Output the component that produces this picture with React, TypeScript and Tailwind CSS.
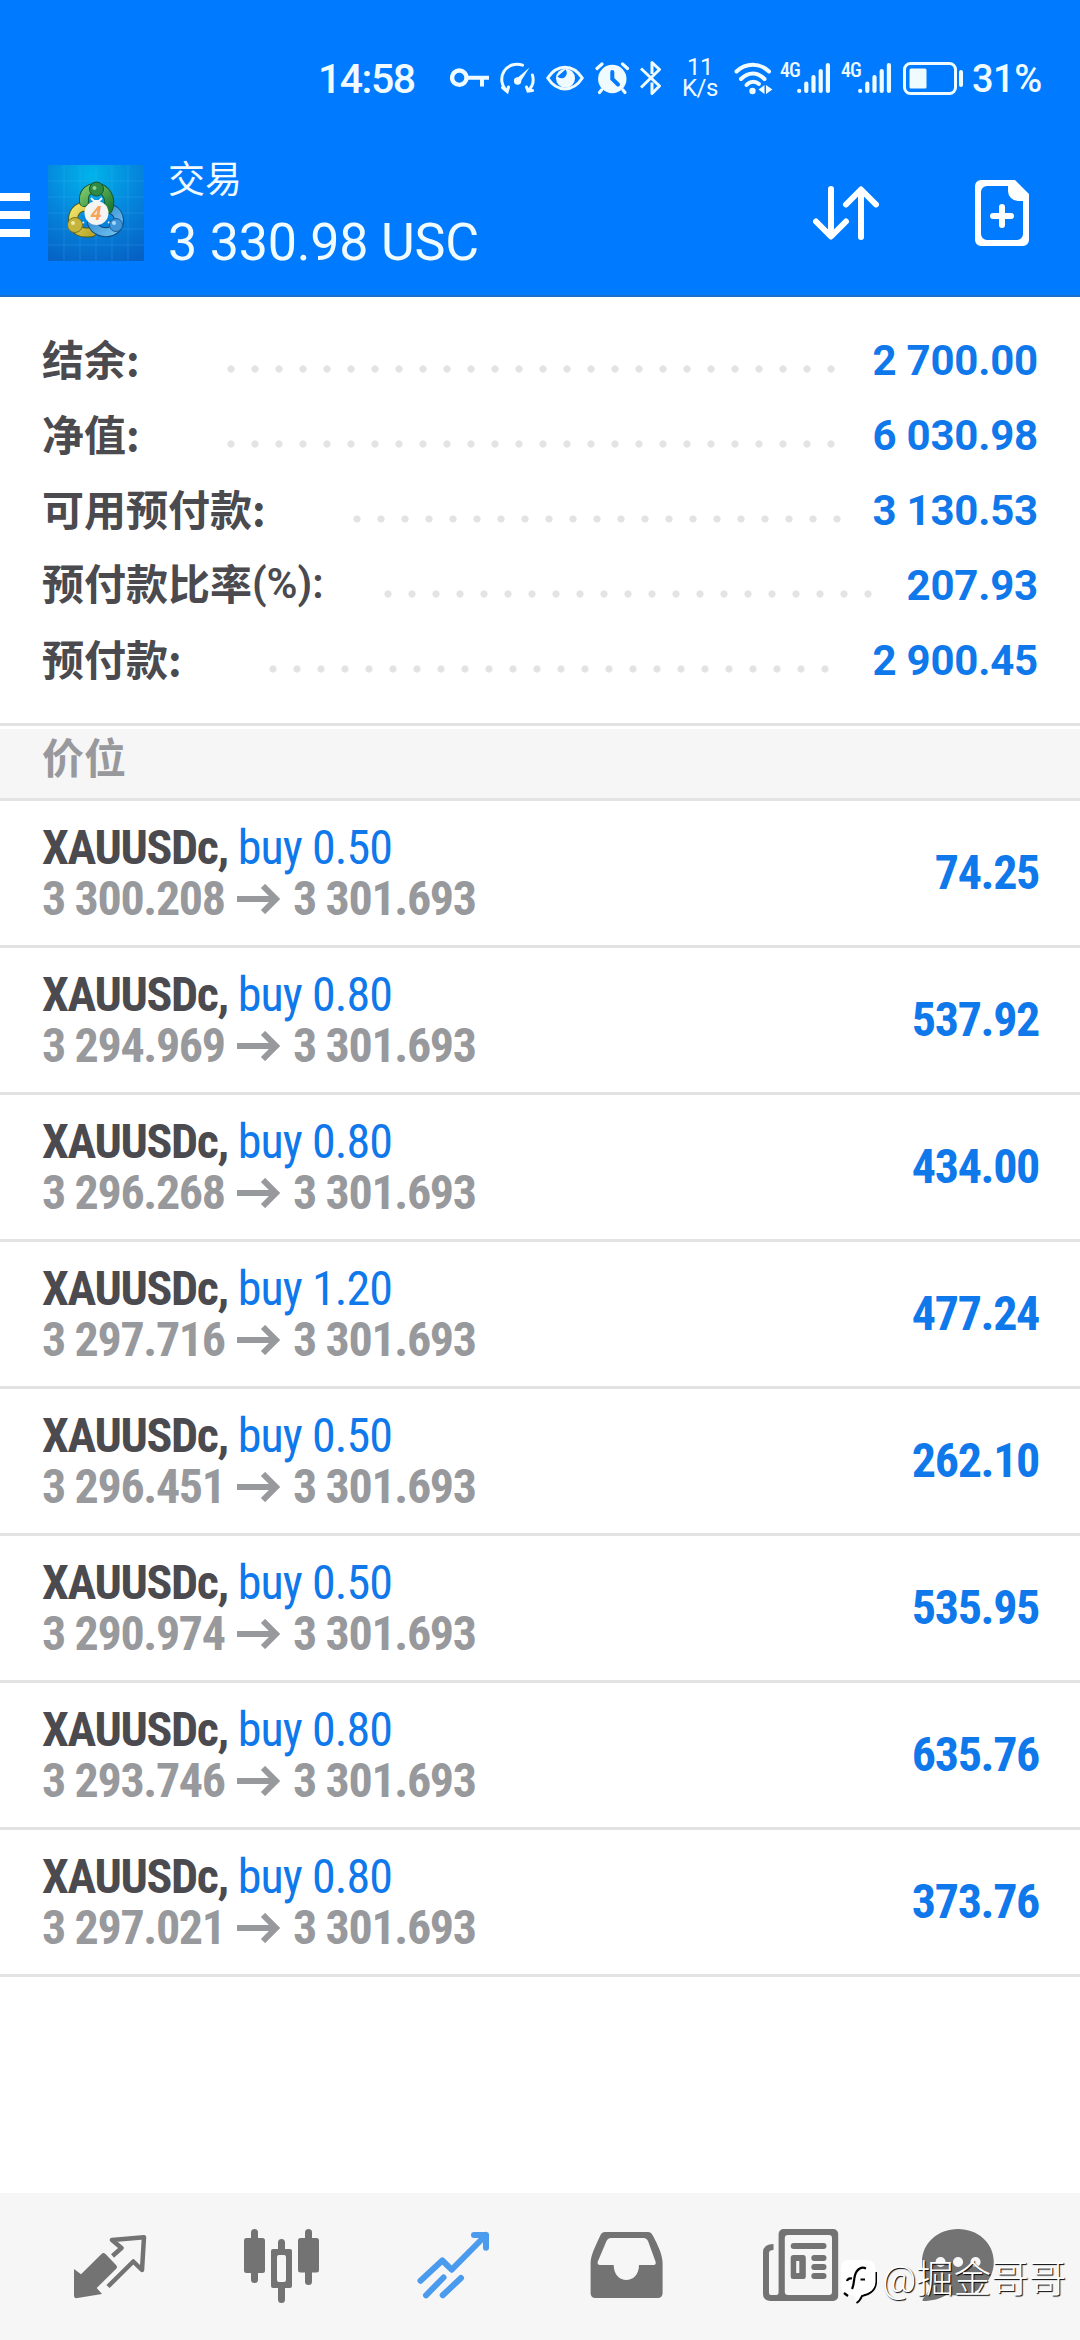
import type { ReactNode } from "react";

type Summary = { label: string; suffix?: string; value: string; labelWidth: string; dotsWidth: string };

const SUMMARY: Summary[] = [
  { label: "结余:", value: "2 700.00", labelWidth: "w-[185px]", dotsWidth: "w-[612px]" },
  { label: "净值:", value: "6 030.98", labelWidth: "w-[185px]", dotsWidth: "w-[612px]" },
  { label: "可用预付款:", value: "3 130.53", labelWidth: "w-[311px]", dotsWidth: "w-[492px]" },
  { label: "预付款比率", suffix: "(%):", value: "207.93", labelWidth: "w-[342px]", dotsWidth: "w-[492px]" },
  { label: "预付款:", value: "2 900.45", labelWidth: "w-[227px]", dotsWidth: "w-[564px]" },
];

const POSITIONS = [
  { lots: "0.50", open: "3 300.208", profit: "74.25" },
  { lots: "0.80", open: "3 294.969", profit: "537.92" },
  { lots: "0.80", open: "3 296.268", profit: "434.00" },
  { lots: "1.20", open: "3 297.716", profit: "477.24" },
  { lots: "0.50", open: "3 296.451", profit: "262.10" },
  { lots: "0.50", open: "3 290.974", profit: "535.95" },
  { lots: "0.80", open: "3 293.746", profit: "635.76" },
  { lots: "0.80", open: "3 297.021", profit: "373.76" },
];

const PRICE = "3 301.693";

function Signal({ className }: { className: string }) {
  return (
    <div className={`flex items-start ${className}`}>
      <span className="mt-[1px] w-[17px] text-[20px] leading-[19px] font-medium tracking-[-1px] [font-stretch:75%]">4G</span>
      <svg width="34" height="36" viewBox="0 0 34 36" stroke="currentColor" strokeWidth="4.2" strokeLinecap="round">
        <path d="M2.2 30.8v.2M9.3 23.5V31M16.5 17V31M23.7 11V31M30.9 5V31" />
      </svg>
    </div>
  );
}

function StatusBar() {
  return (
    <div className="flex h-[140px] items-start pt-[60px] text-[#f0fbff]">
      <span className="ml-[318px] w-[132px] text-[41px] leading-[39px] font-medium tracking-[-1.5px]">14:58</span>
      <svg width="40" height="36" viewBox="0 0 40 36" fill="none" stroke="currentColor" strokeWidth="4">
        <circle cx="9.3" cy="17.7" r="7.2" strokeWidth="4.4" />
        <path d="M17 17.7H39M32 18v8.6" />
      </svg>
      <svg className="ml-[10px]" width="36" height="36" viewBox="0 0 36 36" fill="none" stroke="currentColor" strokeWidth="3" strokeLinecap="round">
        <path d="M2.5 27.5 7.2 31.6 8.5 27M7.2 31A15.2 15.2 0 0 1 22.5 5.2M32.4 15A15.2 15.2 0 0 1 28.3 30.5M32.5 30.6 28 31.2 26.5 27" />
        <path d="M15.5 19.5 29.5 7.5 20 22.5Z" fill="currentColor" stroke="none" />
        <circle cx="17.6" cy="21" r="3.7" fill="currentColor" stroke="none" />
      </svg>
      <svg className="ml-[10px]" width="38" height="36" viewBox="0 0 38 36" fill="none" stroke="currentColor" strokeWidth="3">
        <path d="M1.7 18C11 3.5 27 3.5 36.3 18 27 32.5 11 32.5 1.7 18Z" strokeLinejoin="round" />
        <circle cx="19.5" cy="18.3" r="9.5" fill="currentColor" stroke="none" />
        <path d="M19.5 9.5A5 5 0 1 1 11.5 16.5" fill="#007aff" stroke="none" />
      </svg>
      <svg className="ml-[11px]" width="35" height="36" viewBox="0 0 35 36" fill="none" stroke="currentColor" strokeWidth="3.2" strokeLinecap="round">
        <circle cx="17.3" cy="19" r="14.2" fill="currentColor" stroke="none" />
        <path d="M2 8.5 7 4M32.5 8.5 27.5 4M6.5 30 4.5 32.5M28 30 30 32.5" />
        <path d="M17.3 12V19L23 24.5" stroke="#007aff" strokeWidth="4" />
      </svg>
      <svg className="ml-[10px]" width="22" height="36" viewBox="0 0 22 36" fill="none" stroke="currentColor" strokeWidth="3" strokeLinejoin="round">
        <path d="M1 8.5 19.5 26 12 33.5V22.5M1 27.5 19.5 9.5 12 2.5V14" />
      </svg>
      <div className="ml-[20px] flex w-[36px] flex-col items-center text-[24px] leading-[21px] tracking-[-0.5px]">
        <span className="-mt-[3px]">11</span>
        <span>K/s</span>
      </div>
      <svg className="ml-[16px]" width="40" height="36" viewBox="0 0 40 36" fill="none" stroke="currentColor" strokeWidth="4" strokeLinecap="round">
        <path d="M2.5 11.5C12 2.5 25.5 2.5 35 11.5M7 19C14.5 11.5 23 11.5 30.5 19" />
        <path d="M12.5 25C16 21 21.5 21 25 24" />
        <circle cx="18.5" cy="31" r="3.2" fill="currentColor" stroke="none" />
        <path d="M24.5 29.5 30.5 25V34ZM32 25V34L38.5 29.5Z" fill="currentColor" stroke="none" />
      </svg>
      <Signal className="ml-[6px]" />
      <Signal className="ml-[10px]" />
      <svg className="ml-[11px]" width="62" height="36" viewBox="0 0 62 36" fill="none" stroke="currentColor">
        <rect x="1.500" y="3.500" width="51" height="30" rx="6" strokeWidth="3" />
        <rect x="6.500" y="8.500" width="17" height="20" rx="1.500" fill="currentColor" stroke="none" />
        <path d="M58 12V25" strokeWidth="4" strokeLinecap="round" />
      </svg>
      <span className="ml-[7px] text-[38px] leading-[38px] font-medium tracking-[-0.5px]">31%</span>
    </div>
  );
}

function Logo() {
  return (
    <svg width="96" height="96" viewBox="0 0 96 96">
      <defs>
        <radialGradient id="sky" cx="0.45" cy="0.1" r="1">
          <stop offset="0" stopColor="#00b4ea" />
          <stop offset="0.5" stopColor="#0585dc" />
          <stop offset="1" stopColor="#0661c4" />
        </radialGradient>
        <linearGradient id="green" x1="0" y1="0" x2="1" y2="1">
          <stop offset="0" stopColor="#7cc96a" />
          <stop offset="1" stopColor="#1f7a35" />
        </linearGradient>
        <linearGradient id="gold" x1="0" y1="0" x2="1" y2="1">
          <stop offset="0" stopColor="#f0e468" />
          <stop offset="1" stopColor="#b9a82c" />
        </linearGradient>
        <linearGradient id="azure" x1="0" y1="0" x2="1" y2="1">
          <stop offset="0" stopColor="#2f86cc" />
          <stop offset="1" stopColor="#6cc0f0" />
        </linearGradient>
      </defs>
      <rect width="96" height="96" fill="url(#sky)" />
      <path d="M16 0V96M32 0V96M48 0V96M64 0V96M80 0V96M0 16H96M0 32H96M0 48H96M0 64H96M0 80H96" stroke="#5cc4f5" strokeOpacity="0.2" />
      <g fill="none" strokeLinecap="round">
        <path d="M41 43C32 39 25 46 25 55C25 66 34 69 44 67" stroke="#4f5a1c" strokeWidth="10" />
        <path d="M41 43C32 39 25 46 25 55C25 66 34 69 44 67" stroke="url(#gold)" strokeWidth="8" />
        <path d="M44 58C47 66 56 69 64 66C74 62 73 48 63 44" stroke="#12467c" strokeWidth="10" />
        <path d="M44 58C47 66 56 69 64 66C74 62 73 48 63 44" stroke="url(#azure)" strokeWidth="8" />
        <path d="M36 37C35 27 41 23 48 23C58 23 64 34 60 44" stroke="#155c2a" strokeWidth="10" />
        <path d="M36 37C35 27 41 23 48 23C58 23 64 34 60 44" stroke="url(#green)" strokeWidth="8" />
      </g>
      <path d="M43 33 46 36H51L54 33M31 60 36 57M60 57 65 60" stroke="#f4f4f2" strokeWidth="2" fill="none" />
      <circle cx="48.500" cy="24" r="7" fill="#2f8a46" stroke="#145a2a" />
      <circle cx="27" cy="60" r="7.500" fill="#c5b53c" stroke="#7d7420" />
      <circle cx="68" cy="60" r="6.500" fill="#3f95d8" stroke="#1a5c9a" />
      <circle cx="46.500" cy="23" r="2" fill="#8fd190" />
      <circle cx="25" cy="58" r="2" fill="#f3eaa0" />
      <circle cx="66" cy="58" r="2" fill="#a5d8fa" />
      <circle cx="48.500" cy="48" r="12" fill="#f4f4f2" />
      <text x="48" y="55" textAnchor="middle" fontSize="20" fontStyle="italic" fontWeight="700" fontFamily="Roboto, sans-serif" fill="#f7a35a">
        4
      </text>
    </svg>
  );
}

function Header() {
  return (
    <div className="flex h-[157px] items-start border-b-2 border-[#1a6fc9] text-white">
      <div className="mt-[53px] flex w-[30px] flex-col gap-[10px]">
        <div className="h-2 bg-white" />
        <div className="h-2 bg-white" />
        <div className="h-2 bg-white" />
      </div>
      <div className="mt-[25px] ml-[18px]">
        <Logo />
      </div>
      <div className="mt-[17px] ml-[24px] flex w-[645px] flex-col text-[#f0fbff]">
        <span className="text-[37px] leading-[48px]">交易</span>
        <span className="mt-[8px] text-[52px] leading-[60px] tracking-[-0.2px]">3 330.98 USC</span>
      </div>
      <svg className="mt-[46px]" width="66" height="54" viewBox="0 0 66 54" fill="none" stroke="currentColor" strokeWidth="6" strokeLinecap="round" strokeLinejoin="round">
        <path d="M18 3V50M3 35.5 18 50.5 33 35.5M48 51V4M33 18.5 48 3.5 63 18.5" />
      </svg>
      <svg className="mt-[40px] ml-[96px]" width="54" height="66" viewBox="0 0 54 66">
        <path
          fillRule="evenodd"
          fill="currentColor"
          d="M6 0H40L54 14V60a6 6 0 0 1-6 6H6a6 6 0 0 1-6-6V6a6 6 0 0 1 6-6ZM12 6a6 6 0 0 0-6 6V54a6 6 0 0 0 6 6H42a6 6 0 0 0 6-6V21H43A10 10 0 0 1 33 11V6Z"
        />
        <path d="M27 27V45M18 36H36" stroke="currentColor" strokeWidth="6" strokeLinecap="round" />
      </svg>
    </div>
  );
}

function SummaryRow({ row }: { row: Summary }) {
  return (
    <div className="flex h-[75px] items-center text-[42px] leading-[75px] font-bold">
      <div className={`-mt-[6px] flex shrink-0 whitespace-nowrap text-[#4a4a4f] ${row.labelWidth}`}>
        <span className="font-['Noto_Sans_CJK_SC',sans-serif]">{row.label}</span>
        {row.suffix && <span className="mt-[2px] font-semibold">{row.suffix}</span>}
      </div>
      <div
        className={`mt-4 h-[8px] shrink-0 bg-[radial-gradient(circle_at_4px_4px,#e3e3e3_3.2px,transparent_4px)] bg-[length:24px_8px] ${row.dotsWidth}`}
      />
      <span className="ml-auto whitespace-nowrap text-[#0f78ea] tracking-[-0.2px]">{row.value}</span>
    </div>
  );
}

function PositionRow({ lots, open, profit }: { lots: string; open: string; profit: string }) {
  return (
    <div className="flex h-[147px] items-center justify-between border-b-[3px] border-[#e3e3e3] px-[42px] text-[48px] leading-[51px] font-bold tracking-[-1.35px] [font-stretch:75%]">
      <div className="whitespace-nowrap">
        <div className="text-[#4a4a4f]">
          XAUUSDc, <span className="font-normal tracking-[-0.9px] text-[#0f78ea]">buy {lots}</span>
        </div>
        <div className="flex items-center text-[#98999c]">
          <span className="w-[195px]">{open}</span>
          <svg className="mr-[13px]" width="43" height="30" viewBox="0 0 43 30" fill="none" stroke="currentColor" strokeWidth="6">
            <path d="M0 15H39M26 2 39 15 26 28" />
          </svg>
          <span>{PRICE}</span>
        </div>
      </div>
      <span className="-mt-[2px] -mr-[1px] text-[#0f78ea]">{profit}</span>
    </div>
  );
}

function NavIcon({ className, children }: { className: string; children: ReactNode }) {
  return (
    <svg className={`shrink-0 ${className}`} width="80" height="80" viewBox="0 0 80 80" fill="currentColor">
      {children}
    </svg>
  );
}

function BottomNav() {
  return (
    <div className="relative flex h-[147px] bg-[#f6f6f6] pt-[33px] text-[#737373]">
      <NavIcon className="ml-[70px]">
        <path d="M4 43 11 48.3 31.5 28Q33.3 26 35.5 28L46 39Q48 41 46 43L26.7 62 32 68 6 72.3Q4 72 4 70Z" />
        <path d="M42.5 30 51.5 22 42 14 74 11.2 72 44 63.3 35.5 38 60.5" fill="none" stroke="currentColor" strokeWidth="4.5" strokeLinejoin="round" />
      </NavIcon>
      <NavIcon className="ml-[92px]">
        <rect x="2" y="12" width="21" height="35" rx="2.500" />
        <rect x="9" y="3" width="7" height="54" rx="3.500" />
        <path fillRule="evenodd" d="M31 23H48a2 2 0 0 1 2 2V60a2 2 0 0 1-2 2H31a2 2 0 0 1-2-2V25a2 2 0 0 1 2-2ZM37 29a2 2 0 0 0-2 2V54a2 2 0 0 0 2 2H42a2 2 0 0 0 2-2V31a2 2 0 0 0-2-2Z" />
        <path d="M36 24V16.5a3.5 3.5 0 0 1 7 0V24ZM36 61V73.5a3.5 3.5 0 0 0 7 0V61Z" />
        <rect x="56" y="12" width="21" height="34.500" rx="2.500" />
        <rect x="63" y="3" width="7" height="56" rx="3.500" />
      </NavIcon>
      <NavIcon className="ml-[92px] text-[#4a9bee]">
        <path
          d="M6.5 54.7 28.3 34.5 37.7 43.7 72 9M60 9H72V21.7M12 69.3 29.5 51.5M28.7 69.3 47 52"
          fill="none"
          stroke="currentColor"
          strokeWidth="6"
          strokeLinecap="round"
          strokeLinejoin="round"
        />
      </NavIcon>
      <NavIcon className="ml-[93px]">
        <path
          fillRule="evenodd"
          d="M18 6H61Q64 6 65.5 9C71 19 75.6 29 75.6 37V67Q75.6 72 70.6 72H8.6Q3.6 72 3.6 67V37C3.6 29 9 19 13.5 9Q15 6 18 6ZM24 12Q21 12 19.5 15L10.8 35.5Q9.8 39 13 39H26.7C26.7 59 52 59 52 39H66Q69.5 39 68.5 35.5L61 15Q59.5 12 56.5 12Z"
        />
      </NavIcon>
      <NavIcon className="ml-[94px]">
        <path
          fillRule="evenodd"
          d="M22.6 3H72.2a5 5 0 0 1 5 5V70a5 5 0 0 1-5 5H9Q2 74 2 68V26Q2.5 18 12.5 18V24Q8 24 8 27V67Q8 69 10 69H15.5Q17.6 69 17.6 66V8a5 5 0 0 1 5-5ZM27 9Q23.8 9 23.8 12V66Q23.8 69 27 69H68Q71 69 71 66V12Q71 9 68 9Z"
        />
        <path fillRule="evenodd" d="M32 29H42.5Q44.8 29 44.8 31.5V50.5Q44.8 53 42.5 53H32Q29.7 53 29.7 50.5V31.5Q29.7 29 32 29ZM35.2 35V47H38.3V35Z" />
        <path d="M32.7 20H62.5M53.3 32H62.5M53.3 41H62.5M53.3 50H62.5" stroke="currentColor" strokeWidth="6" strokeLinecap="round" />
      </NavIcon>
      <NavIcon className="ml-[77px]">
        <path d="M40 3C60 3 75.8 17 75.8 36S60 69.5 40 69.5Q35 69.5 30 68C22 73 14 75 5 75Q3.5 74 6 71.5 11 66 12 60.5C7 54 4 46 4 36 4 17 20 3 40 3Z" />
        <path d="M22.5 36h.1M40 36h.1M57.5 36h.1" stroke="#f6f6f6" strokeWidth="10" strokeLinecap="round" />
      </NavIcon>

      <div className="absolute top-[60px] left-[838px] flex items-start text-white">
        <svg width="44" height="54" viewBox="0 0 44 54">
          <path d="M38 19V30Q37 38 30 41L24 43Q22 48 18.5 50" fill="none" stroke="#000" strokeWidth="2" />
          <path d="M11 7H28Q37.500 7 37.500 17V29Q37 37 29 40L23 42 18 48 17 43 13 42H7Q3 38 3 32V16Q3 7 11 7Z" fill="#fff" />
          <path d="M14 36C17 30 15 23 19 18Q23 13 28 15.500M9 28Q10 24.500 14 25.500M22.500 26.500H27M6 40 10 43" fill="none" stroke="#000" strokeWidth="2.200" />
        </svg>
        <span className="text-[37.5px] leading-[53px] font-light [text-shadow:1px_1px_1px_#000]">@掘金哥哥</span>
      </div>
    </div>
  );
}

export default function App() {
  return (
    <div className="flex h-[2340px] w-[1080px] flex-col overflow-hidden bg-white font-[Roboto,'Noto_Sans_CJK_SC',sans-serif]">
      <div className="bg-[#007aff]">
        <StatusBar />
        <Header />
      </div>
      <div className="px-[42px] pt-[26px] pb-[25px]">
        {SUMMARY.map((row) => (
          <SummaryRow key={row.label} row={row} />
        ))}
      </div>
      <div className="h-[78px] border-y-[3px] border-[#e3e3e3] pt-[3px]">
        <div className="h-[69px] bg-[#f6f6f6] pl-[42px] text-[42px] leading-[61px] font-bold text-[#98999c]">价位</div>
      </div>
      <div className="grow">
        {POSITIONS.map((p) => (
          <PositionRow key={p.open} {...p} />
        ))}
      </div>
      <BottomNav />
    </div>
  );
}
